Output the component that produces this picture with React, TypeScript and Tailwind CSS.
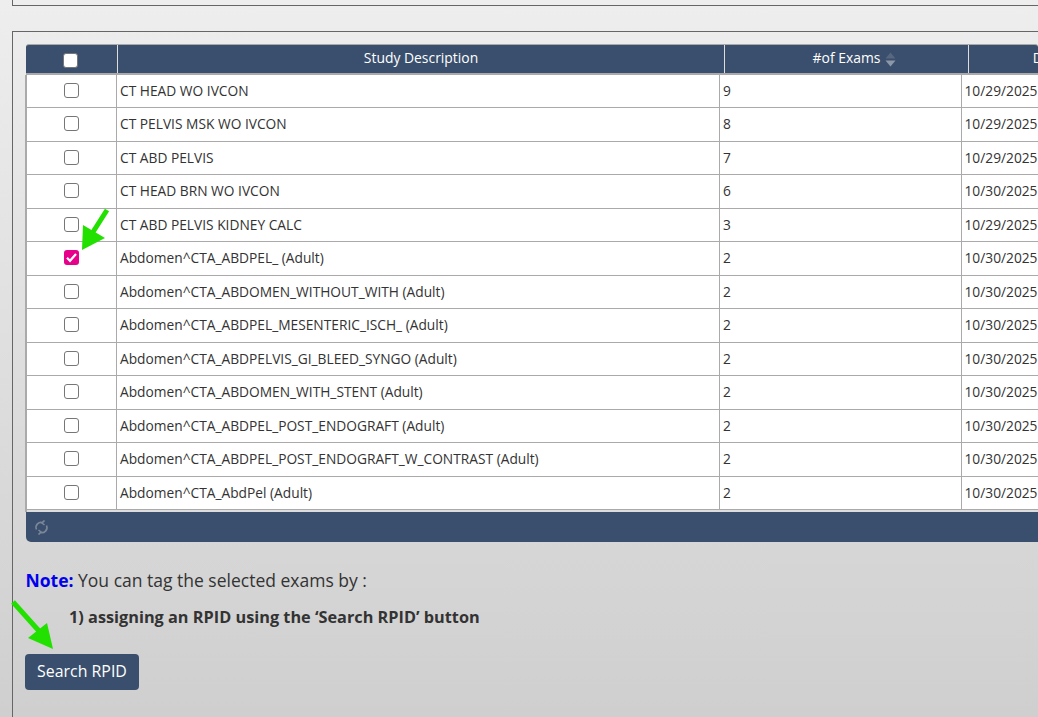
const rows = [
  ["CT HEAD WO IVCON", "9", "10/29/2025"],
  ["CT PELVIS MSK WO IVCON", "8", "10/29/2025"],
  ["CT ABD PELVIS", "7", "10/29/2025"],
  ["CT HEAD BRN WO IVCON", "6", "10/30/2025"],
  ["CT ABD PELVIS KIDNEY CALC", "3", "10/29/2025"],
  ["Abdomen^CTA_ABDPEL_ (Adult)", "2", "10/30/2025"],
  ["Abdomen^CTA_ABDOMEN_WITHOUT_WITH (Adult)", "2", "10/30/2025"],
  ["Abdomen^CTA_ABDPEL_MESENTERIC_ISCH_ (Adult)", "2", "10/30/2025"],
  ["Abdomen^CTA_ABDPELVIS_GI_BLEED_SYNGO (Adult)", "2", "10/30/2025"],
  ["Abdomen^CTA_ABDOMEN_WITH_STENT (Adult)", "2", "10/30/2025"],
  ["Abdomen^CTA_ABDPEL_POST_ENDOGRAFT (Adult)", "2", "10/30/2025"],
  ["Abdomen^CTA_ABDPEL_POST_ENDOGRAFT_W_CONTRAST (Adult)", "2", "10/30/2025"],
  ["Abdomen^CTA_AbdPel (Adult)", "2", "10/30/2025"],
];

function Box({ checked }: { checked?: boolean }) {
  if (checked) {
    return (
      <span className="flex h-[15px] w-[15px] items-center justify-center rounded-[3px] bg-[#e6008a]">
        <svg width="13" height="13" viewBox="0 0 13 13" fill="none">
          <path d="M2 6.8 L5 9.8 L11 3" stroke="#fff" strokeWidth="2.2" />
        </svg>
      </span>
    );
  }
  return <span className="h-[15px] w-[15px] rounded-[3px] border border-[#767676] bg-white" />;
}

export default function App() {
  return (
    <div className="relative h-[717px] w-[1038px] overflow-hidden bg-gradient-to-b from-[#eeeeee] to-[#cfcfcf] font-['Open_Sans',sans-serif] text-[#333]">
      {/* panel above, only its bottom edge is in view */}
      <div className="ml-3 h-[6px] border-b border-l border-[#666]" />

      <div className="ml-3 mt-[25px] h-[700px] border-l border-t border-[#666] pl-[12px] pt-[12px]">
        {/* grid */}
        <div className="overflow-hidden">
          <div className="ml-[1px] flex h-[30.5px] rounded-t-[3px] border-b-2 border-t border-[#aaa] bg-[#3a4f6d] text-[13.9px] text-white">
            <div className="flex w-[92px] shrink-0 items-center justify-center border-r border-[#ddd] pr-[3px] pt-[3px]">
              <span className="h-[15px] w-[15px] rounded-[3px] border border-[#767676] bg-white" />
            </div>
            <div className="flex w-[607px] shrink-0 items-center justify-center border-r border-[#ddd] pb-[1px]">Study Description</div>
            <div className="flex w-[244px] shrink-0 items-center justify-center border-r border-[#ddd] pb-[1px] pl-[16px]">
              #of Exams
              <svg className="ml-[5px] mt-[2px]" width="11" height="15" viewBox="0 0 11 15">
                <path d="M5.5 0.5 L10.5 6.5 H0.5 Z" fill="#56677f" />
                <path d="M5.5 14.5 L10.5 8.5 H0.5 Z" fill="#8c98a8" />
              </svg>
            </div>
            <div className="flex w-[158px] shrink-0 items-center justify-center pb-[1px]">Date</div>
          </div>

          <div className="h-[437.5px] border-l-2 border-[#aaa] bg-white text-[13.75px] text-[#333]">
            {rows.map((r, i) => (
              <div key={r[0]} className="flex h-[33.5px] border-b border-[#aaa]">
                <div className="flex w-[90px] shrink-0 items-center justify-center border-r border-[#aaa] pb-[1px] pr-[1px]">
                  <Box checked={i === 5} />
                </div>
                <div className="flex w-[603px] shrink-0 items-center whitespace-nowrap border-r border-[#aaa] pl-[3px] pt-[1px]">{r[0]}</div>
                <div className="flex w-[242px] shrink-0 items-center border-r border-[#aaa] pl-[3px] pt-[1px]">{r[1]}</div>
                <div className="flex w-[100px] shrink-0 items-center whitespace-nowrap pl-[2.5px] pt-[1px]">{r[2]}</div>
              </div>
            ))}
            <div className="h-[2px] bg-[#ddd]" />
          </div>

          <div className="ml-[1px] flex h-[30px] items-center rounded-bl-[5px] bg-[#3a4f6d] pl-[8px]">
            <svg width="15" height="15" viewBox="0 0 15 15" fill="none" stroke="#7b8798" strokeWidth="1.6">
              <path d="M2.5 9.5 A5 5 0 0 1 9 2.8" />
              <path d="M12.5 5.5 A5 5 0 0 1 6 12.2" />
              <path d="M10.5 0.5 L8 3 L10.5 5" />
              <path d="M4.5 14.5 L7 12 L4.5 10" />
            </svg>
          </div>
        </div>

        <div className="ml-[0.5px] mt-[26px] text-[17.5px] leading-[24px]">
          <b className="font-bold text-[#0000ee]">Note:</b> You can tag the selected exams by :
        </div>
        <div className="ml-[44px] mt-[13px] text-[16.3px] font-bold leading-[24px]">
          1) assigning an RPID using the ‘Search RPID’ button
        </div>
        <button className="mt-[25px] h-[36px] w-[114px] rounded-[4px] bg-[#3a4f6d] pb-[1px] text-[15.9px] text-white">Search RPID</button>
      </div>

      {/* green annotation arrows drawn over the page */}
      <svg className="absolute left-0 top-0" width="1038" height="717" fill="#22e000">
        <path d="M107 210 L93 232" stroke="#22e000" strokeWidth="5" />
        <path d="M82 250 L83 225 L105 238 Z" />
        <path d="M13 602 L39 631" stroke="#22e000" strokeWidth="5" />
        <path d="M53 649 L47 623 L28 638 Z" />
      </svg>
    </div>
  );
}
